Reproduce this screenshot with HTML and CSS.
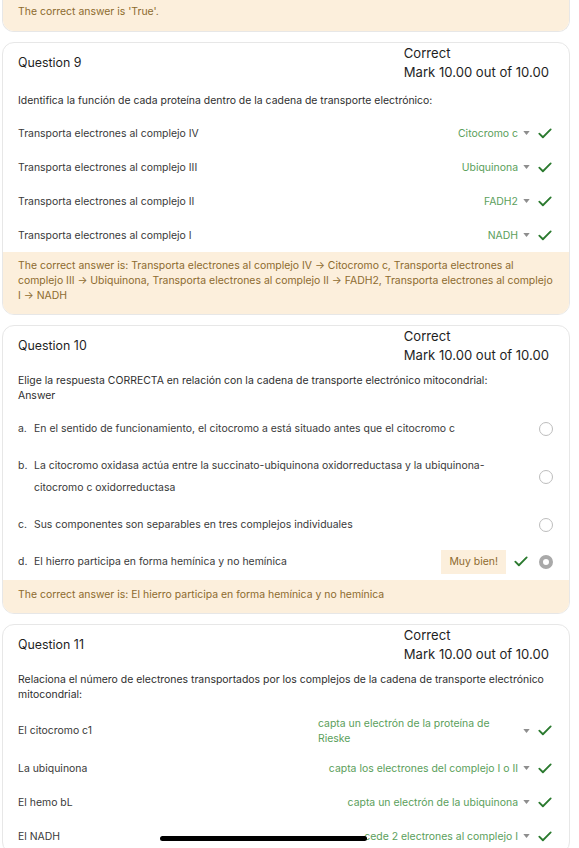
FILE: index.html
```html
<!DOCTYPE html>
<html lang="es">
<head>
<meta charset="utf-8">
<title>Quiz review</title>
<link rel="stylesheet" href="styles.css">
</head>
<body>
<div class="page">

  <div class="card card-partial">
    <div class="feedback">The correct answer is 'True'.</div>
  </div>

  <div class="card">
    <div class="qhead">
      <div class="qno">Question 9</div>
      <div class="qstate">
        <div>Correct</div>
        <div>Mark 10.00 out of 10.00</div>
      </div>
    </div>
    <div class="qtext qtext-first">Identifica la función de cada proteína dentro de la cadena de transporte electrónico:</div>
    <div class="matches">
      <div class="mrow">
        <div class="mlabel">Transporta electrones al complejo IV</div>
        <div class="mright">
          <span class="sel"><span class="seltext">Citocromo c</span><svg class="caret" viewBox="0 0 8 5"><path d="M0 0h8L4 5z"/></svg></span>
          <svg class="check" viewBox="0 0 16 12"><path d="M1.5 6.2L5.6 10.3L14.5 1.4"/></svg>
        </div>
      </div>
      <div class="mrow">
        <div class="mlabel">Transporta electrones al complejo III</div>
        <div class="mright">
          <span class="sel"><span class="seltext">Ubiquinona</span><svg class="caret" viewBox="0 0 8 5"><path d="M0 0h8L4 5z"/></svg></span>
          <svg class="check" viewBox="0 0 16 12"><path d="M1.5 6.2L5.6 10.3L14.5 1.4"/></svg>
        </div>
      </div>
      <div class="mrow">
        <div class="mlabel">Transporta electrones al complejo II</div>
        <div class="mright">
          <span class="sel"><span class="seltext">FADH2</span><svg class="caret" viewBox="0 0 8 5"><path d="M0 0h8L4 5z"/></svg></span>
          <svg class="check" viewBox="0 0 16 12"><path d="M1.5 6.2L5.6 10.3L14.5 1.4"/></svg>
        </div>
      </div>
      <div class="mrow">
        <div class="mlabel">Transporta electrones al complejo I</div>
        <div class="mright">
          <span class="sel"><span class="seltext">NADH</span><svg class="caret" viewBox="0 0 8 5"><path d="M0 0h8L4 5z"/></svg></span>
          <svg class="check" viewBox="0 0 16 12"><path d="M1.5 6.2L5.6 10.3L14.5 1.4"/></svg>
        </div>
      </div>
    </div>
    <div class="feedback">The correct answer is: Transporta electrones al complejo IV → Citocromo c, Transporta electrones al complejo III → Ubiquinona, Transporta electrones al complejo II → FADH2, Transporta electrones al complejo I → NADH</div>
  </div>

  <div class="card">
    <div class="qhead">
      <div class="qno">Question 10</div>
      <div class="qstate">
        <div>Correct</div>
        <div>Mark 10.00 out of 10.00</div>
      </div>
    </div>
    <div class="qtext">Elige la respuesta CORRECTA en relación con la cadena de transporte electrónico mitocondrial:<br>Answer</div>
    <div class="options">
      <div class="opt">
        <span class="oletter">a.</span>
        <span class="otext">En el sentido de funcionamiento, el citocromo a está situado antes que el citocromo c</span>
        <span class="radio"></span>
      </div>
      <div class="opt">
        <span class="oletter">b.</span>
        <span class="otext">La citocromo oxidasa actúa entre la succinato-ubiquinona oxidorreductasa y la ubiquinona-citocromo c oxidorreductasa</span>
        <span class="radio"></span>
      </div>
      <div class="opt">
        <span class="oletter">c.</span>
        <span class="otext">Sus componentes son separables en tres complejos individuales</span>
        <span class="radio"></span>
      </div>
      <div class="opt">
        <span class="oletter">d.</span>
        <span class="otext">El hierro participa en forma hemínica y no hemínica</span>
        <span class="badge">Muy bien!</span>
        <svg class="check check-opt" viewBox="0 0 16 12"><path d="M1.5 6.2L5.6 10.3L14.5 1.4"/></svg>
        <span class="radio radio-on"></span>
      </div>
    </div>
    <div class="feedback">The correct answer is: El hierro participa en forma hemínica y no hemínica</div>
  </div>

  <div class="card">
    <div class="qhead">
      <div class="qno">Question 11</div>
      <div class="qstate">
        <div>Correct</div>
        <div>Mark 10.00 out of 10.00</div>
      </div>
    </div>
    <div class="qtext">Relaciona el número de electrones transportados por los complejos de la cadena de transporte electrónico mitocondrial:</div>
    <div class="matches">
      <div class="mrow">
        <div class="mlabel">El citocromo c1</div>
        <div class="mright">
          <span class="sel"><span class="seltext">capta un electrón de la proteína de Rieske</span><svg class="caret" viewBox="0 0 8 5"><path d="M0 0h8L4 5z"/></svg></span>
          <svg class="check" viewBox="0 0 16 12"><path d="M1.5 6.2L5.6 10.3L14.5 1.4"/></svg>
        </div>
      </div>
      <div class="mrow">
        <div class="mlabel">La ubiquinona</div>
        <div class="mright">
          <span class="sel"><span class="seltext">capta los electrones del complejo I o II</span><svg class="caret" viewBox="0 0 8 5"><path d="M0 0h8L4 5z"/></svg></span>
          <svg class="check" viewBox="0 0 16 12"><path d="M1.5 6.2L5.6 10.3L14.5 1.4"/></svg>
        </div>
      </div>
      <div class="mrow">
        <div class="mlabel">El hemo bL</div>
        <div class="mright">
          <span class="sel"><span class="seltext">capta un electrón de la ubiquinona</span><svg class="caret" viewBox="0 0 8 5"><path d="M0 0h8L4 5z"/></svg></span>
          <svg class="check" viewBox="0 0 16 12"><path d="M1.5 6.2L5.6 10.3L14.5 1.4"/></svg>
        </div>
      </div>
      <div class="mrow">
        <div class="mlabel">El NADH</div>
        <div class="mright">
          <span class="sel"><span class="seltext">cede 2 electrones al complejo I</span><svg class="caret" viewBox="0 0 8 5"><path d="M0 0h8L4 5z"/></svg></span>
          <svg class="check" viewBox="0 0 16 12"><path d="M1.5 6.2L5.6 10.3L14.5 1.4"/></svg>
        </div>
      </div>
    </div>
  </div>

</div>
<div class="home-indicator"></div>
</body>
</html>
```
FILE: styles.css
```css
html, body {
  margin: 0;
  padding: 0;
  background: #ffffff;
}
body {
  font-family: Inter, "Noto Sans", "Liberation Sans", sans-serif;
  color: #3a3a3a;
  font-size: 10.45px;
  line-height: 15px;
  overflow: hidden;
  height: 848px;
}
.page {
  padding: 0 9px 0 2px;
}
.card {
  border: 1px solid #e7e7e7;
  border-radius: 12px;
  overflow: hidden;
  margin-bottom: 10px;
  background: #fff;
}
.card-partial {
  border-top: none;
  border-radius: 0 0 12px 12px;
}
.card-partial .feedback {
  padding-top: 3.5px;
  padding-bottom: 12px;
}
.qhead {
  display: flex;
  align-items: center;
  justify-content: space-between;
  padding: 1px 20px 0 15px;
  color: #1f1f1f;
}
.qno {
  font-size: 12.4px;
  line-height: 18px;
}
.qstate {
  white-space: nowrap;
  font-size: 13.1px;
  line-height: 19px;
}
.qtext {
  padding: 0 15px;
  margin-top: 8px;
  color: #2f2f2f;
}
.qtext-first {
  margin-top: 11px;
}
.matches {
  margin-top: 8px;
}
.mrow {
  display: flex;
  align-items: center;
  justify-content: space-between;
  padding: 6px 17px 5px 15px;
  min-height: 23px;
}
.mlabel {
  color: #3a3a3a;
}
.mright {
  display: flex;
  align-items: center;
}
.sel {
  display: flex;
  align-items: center;
  color: #5ba05b;
}
.seltext {
  max-width: 200px;
}
.caret {
  width: 7px;
  height: 4px;
  margin-left: 5px;
  fill: #8e8e8e;
  flex: none;
}
.check {
  width: 14px;
  height: 11px;
  margin-left: 8px;
  fill: none;
  stroke: #2b7a2f;
  stroke-width: 2.1;
  stroke-linecap: round;
  stroke-linejoin: round;
  flex: none;
}
.options {
  margin-top: 7px;
}
.opt {
  display: flex;
  align-items: center;
  padding: 7.5px 16px 7.5px 15px;
  line-height: 22px;
  color: #3a3a3a;
}
.oletter {
  width: 16px;
  flex: none;
  align-self: flex-start;
}
.otext {
  flex: 1;
  padding-right: 20px;
}
.badge {
  background: #fcefdc;
  color: #8d6b2f;
  padding: 1px 8px;
  margin: -1px 0;
  line-height: 22px;
  flex: none;
}
.check-opt {
  margin-left: 8px;
  margin-right: 11px;
}
.radio {
  width: 12px;
  height: 12px;
  border: 1px solid #bdbdbd;
  border-radius: 50%;
  flex: none;
}
.radio-on {
  width: 6px;
  height: 6px;
  border: 4px solid #a9a9a9;
}
.feedback {
  background: #fcefdc;
  color: #8d6b2f;
  padding: 6.5px 15px 11px 15px;
}
.home-indicator {
  position: fixed;
  left: 160px;
  bottom: 7px;
  width: 207px;
  height: 5px;
  border-radius: 3px;
  background: #000;
}
```
